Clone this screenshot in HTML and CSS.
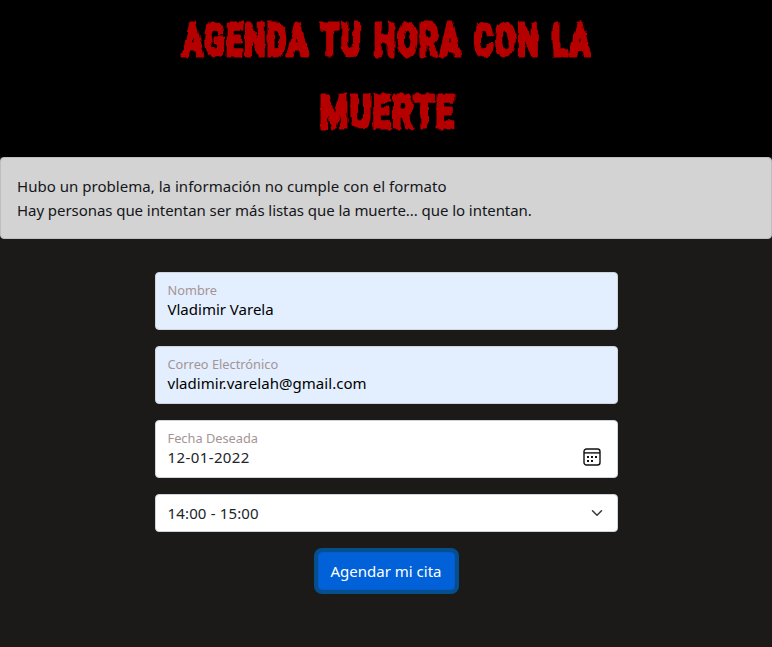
FILE: index.html
```html
<!DOCTYPE html>
<html lang="es">
<head>
<meta charset="utf-8">
<title>Agenda tu hora con la muerte</title>
<link rel="stylesheet" href="styles.css">
</head>
<body>
<header class="banner">
  <h1 class="title">
    <svg width="412" height="144" viewBox="0 0 412 144">
      <defs>
        <filter id="drip" x="-2%" y="-5%" width="104%" height="110%">
          <feTurbulence type="fractalNoise" baseFrequency="0.2 0.12" numOctaves="1" seed="9"/>
          <feDisplacementMap in="SourceGraphic" scale="5" xChannelSelector="R" yChannelSelector="G"/>
        </filter>
      </defs>
      <g class="letters" filter="url(#drip)">
        <text transform="scale(.6 1)" x="4" y="56" textLength="682" lengthAdjust="spacingAndGlyphs">AGENDA TU HORA CON LA</text>
        <text transform="scale(.6 1)" x="233" y="128" textLength="226" lengthAdjust="spacingAndGlyphs">MUERTE</text>
      </g>
    </svg>
  </h1>
</header>
<div class="alert">
  <div class="line-a">Hubo un problema, la información no cumple con el formato</div>
  <div class="line-b">Hay personas que intentan ser más listas que la muerte... que lo intentan.</div>
</div>
<form class="form">
  <div class="field filled"><label>Nombre</label><span class="value">Vladimir Varela</span></div>
  <div class="field filled"><label>Correo Electrónico</label><span class="value mail">vladimir.varelah@gmail.com</span></div>
  <div class="field date">
    <div class="stack"><label>Fecha Deseada</label><span class="value digits">12-01-2022</span></div>
    <svg class="calendar" width="18" height="18" viewBox="0 0 18 18">
      <rect x="1" y="1" width="16" height="16" rx="2.5" fill="none" stroke="#111" stroke-width="1.4"/>
      <path d="M1 4.9h16" stroke="#111" stroke-width="1.4"/>
      <path d="M4 8h2v2H4zM8 8h2v2H8zM12 8h2v2h-2zM4 12h2v2H4zM8 12h2v2H8z" fill="#111"/>
    </svg>
  </div>
  <div class="select"><span class="value hours">14:00 - 15:00</span>
    <svg class="chevron" width="12" height="12" viewBox="0 0 16 16"><path d="M2 5l6 6 6-6" fill="none" stroke="#343a40" stroke-width="2" stroke-linecap="round" stroke-linejoin="round"/></svg>
  </div>
  <button type="button" class="submit">Agendar mi cita</button>
</form>
</body>
</html>
```
FILE: styles.css
```css
* { box-sizing: border-box; }
body {
  margin: 0;
  min-height: 647px;
  background: #1b1a18;
  color: #212529;
  font: 15px/24px "Noto Sans", sans-serif;
}
.banner { height: 157px; background: #000; display: flex; justify-content: center; }
.title { margin: 0; width: 412px; height: 144px; }
.title svg { display: block; overflow: visible; }
.letters {
  fill: #b60000;
  stroke: #b60000;
  stroke-width: 3px;
  stroke-linejoin: round;
  font: 900 47px Roboto, sans-serif;
  letter-spacing: 2px;
  word-spacing: 5px;
}
.alert {
  height: 82px;
  padding: 16px;
  border: 1px solid #bcbebf;
  border-radius: 4px;
  background: #d3d3d3;
  color: #141619;
  white-space: nowrap;
}
.line-a { letter-spacing: 0.03px; }
.line-b { letter-spacing: -0.06px; }
.form {
  width: 463px;
  margin: 33px auto 0;
  display: flex;
  flex-direction: column;
  gap: 16px;
}
.field, .select {
  border: 1px solid #ced4da;
  border-radius: 4px;
  background: #fff;
  padding: 0 12px;
}
.field { height: 58px; padding-top: 8px; }
.filled { background: #e3effe; color: #000; }
label { display: block; font-size: 12.8px; line-height: 18px; color: #a39496; }
.value { display: block; line-height: 20px; }
.mail { letter-spacing: 0.05px; }
.digits { letter-spacing: 0.4px; }
.hours { letter-spacing: 0.15px; }
.date { display: flex; justify-content: space-between; }
.calendar { margin: 18.5px 3.5px 0 0; }
.select { height: 38px; display: flex; align-items: center; justify-content: space-between; }
.chevron { margin-right: 2px; }
.submit {
  align-self: center;
  width: 137px;
  height: 38px;
  margin-top: 4px;
  padding: 0;
  border: 1px solid #0a58ca;
  border-radius: 4px;
  background: #0061d8;
  box-shadow: 0 0 0 4px #044f8e;
  color: #fff;
  font: inherit;
}
```
